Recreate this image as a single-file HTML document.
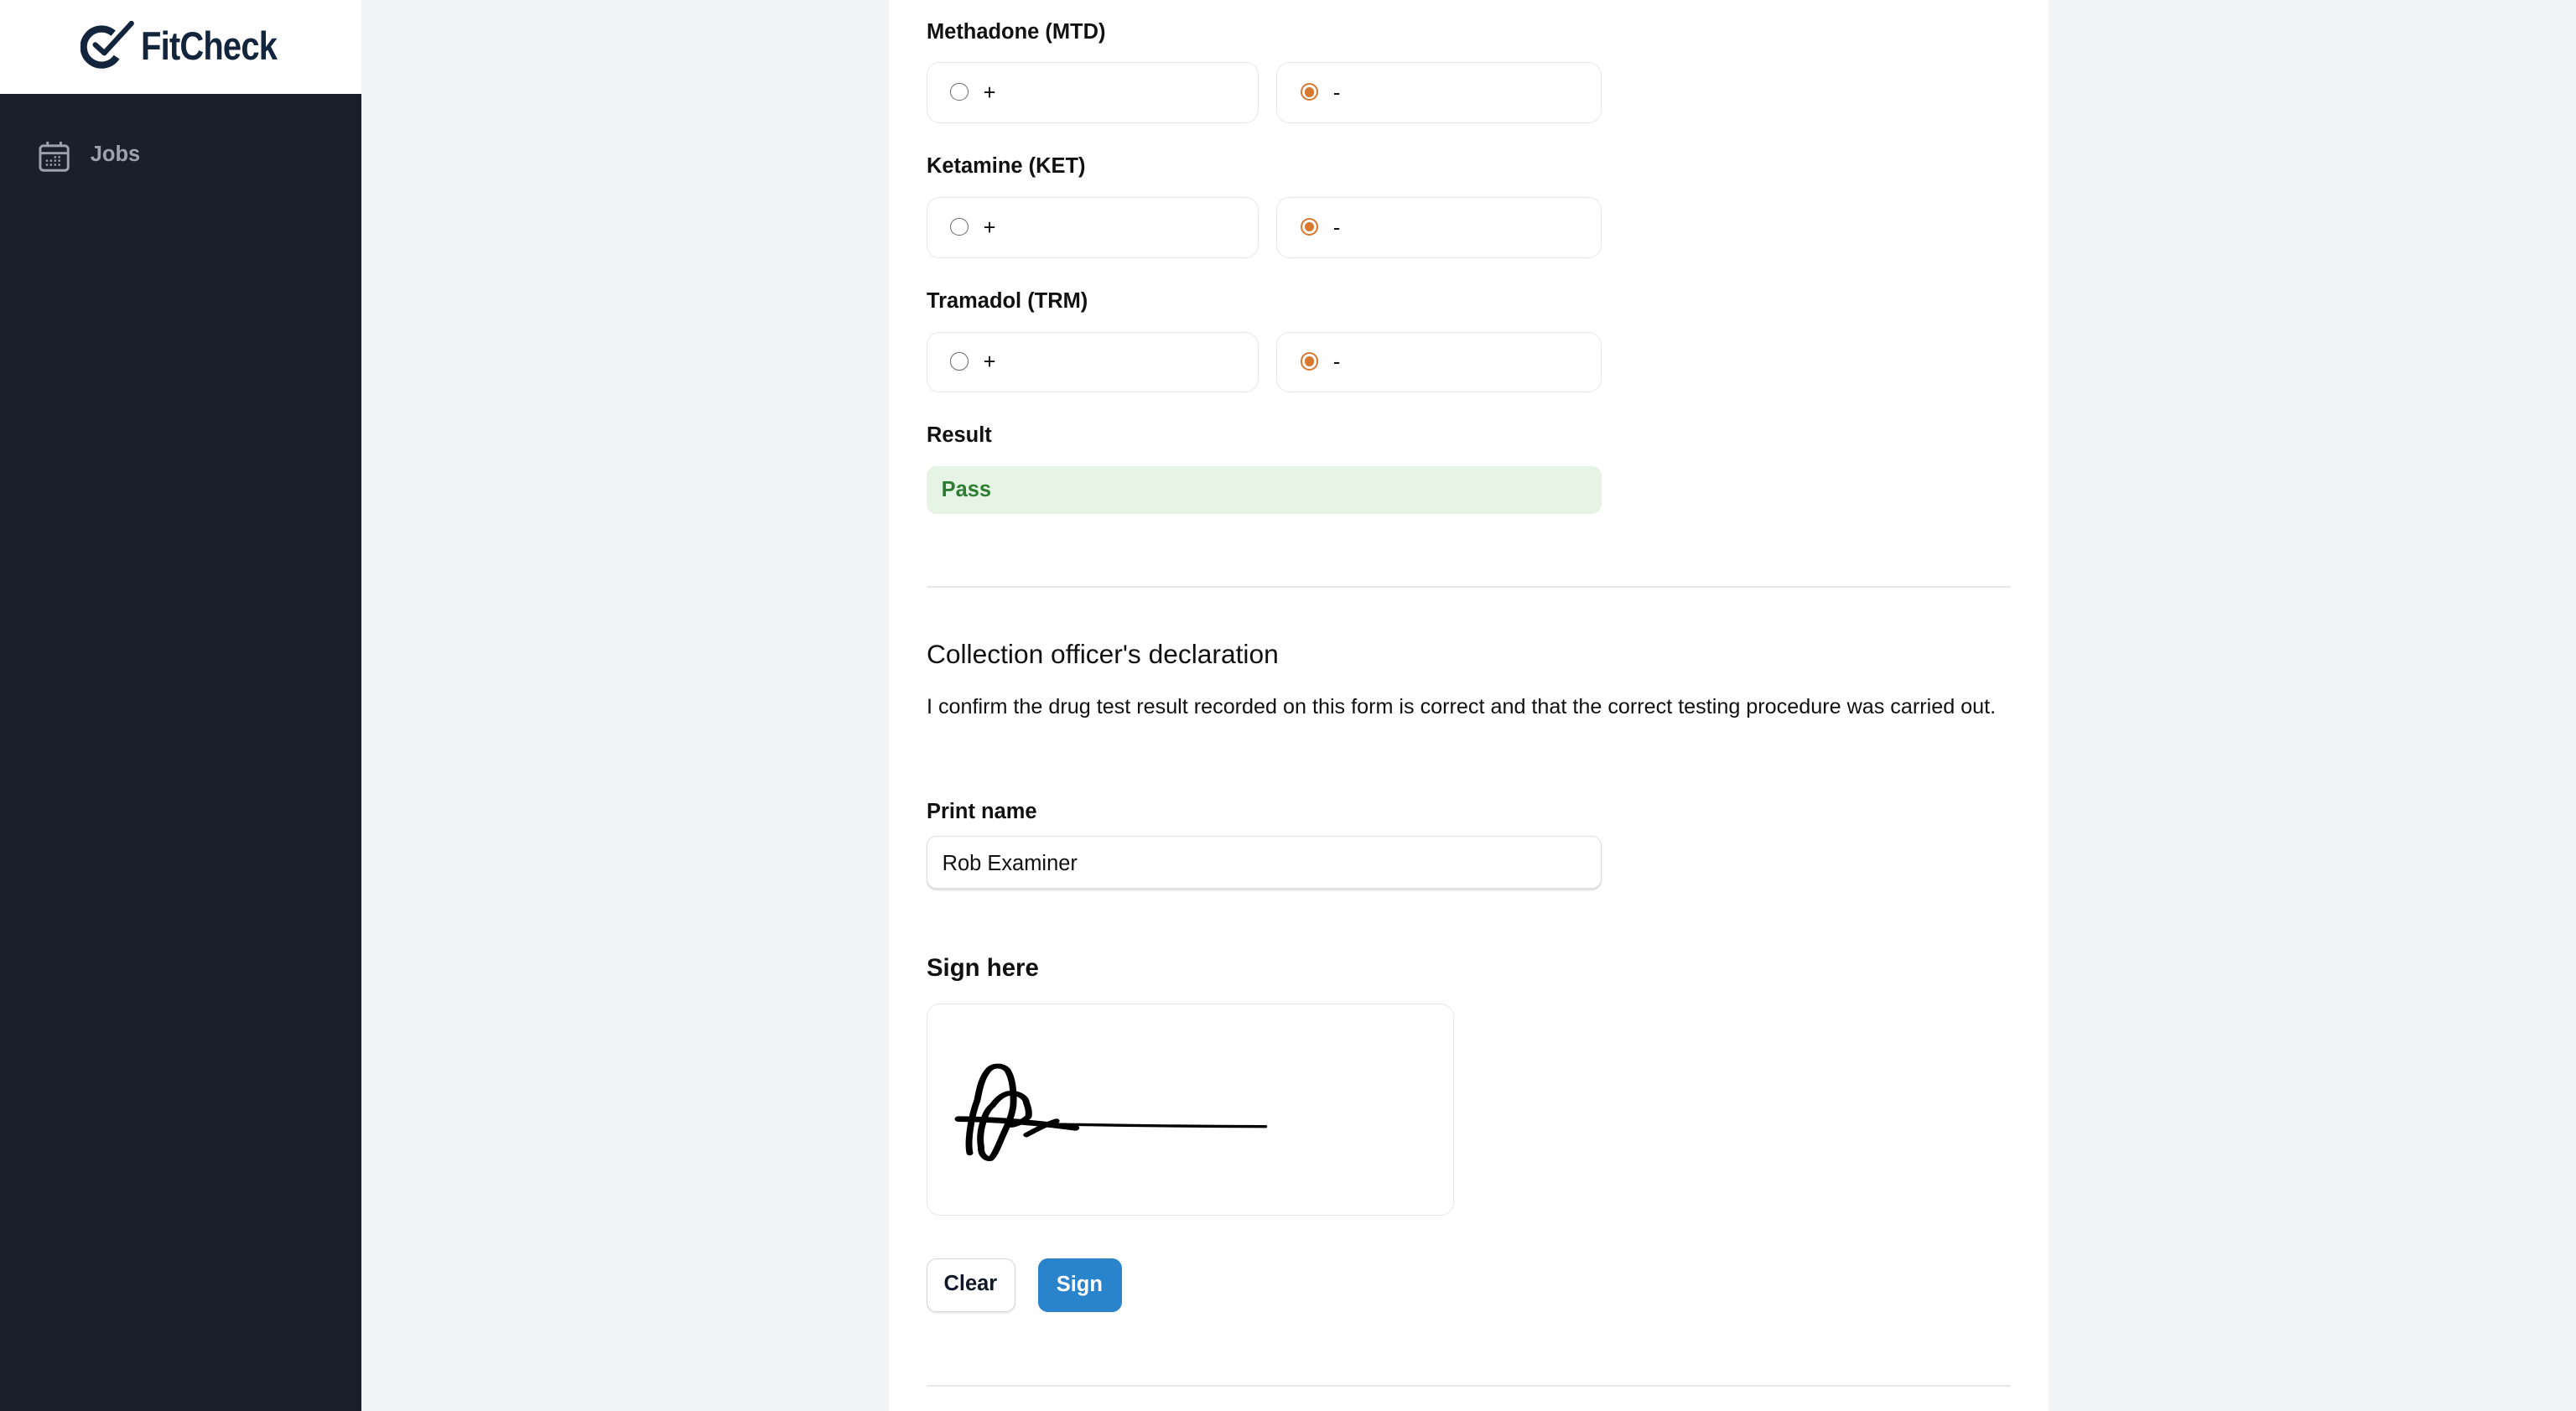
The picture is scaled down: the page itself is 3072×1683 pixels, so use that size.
<!DOCTYPE html>
<html><head><meta charset="utf-8">
<style>
html,body{margin:0;padding:0;}
body{width:1568px;height:859px;zoom:1.95918;overflow:hidden;background:#f3f4f6;font-family:"Liberation Sans",Arial,sans-serif;position:relative;color:#111;}
.side{position:absolute;left:0;top:0;width:220px;height:859px;background:#1b1f2b;}
.logo{position:absolute;left:0;top:0;width:220px;height:57px;background:#fff;}
.logo span{position:absolute;left:86px;top:14px;font-weight:bold;font-size:24px;color:#13243d;letter-spacing:-0.5px;transform:scaleX(0.85);transform-origin:0 0;white-space:nowrap;}
.jobs{position:absolute;left:55px;top:87px;font-size:13px;font-weight:bold;color:#9ca3af;}
.card{position:absolute;left:541px;top:0;width:706px;height:859px;background:#fff;}
.a{position:absolute;}
.lbl{font-size:13px;font-weight:bold;color:#111;}
.box{position:absolute;height:37px;border:1px solid #e5e7eb;border-radius:8px;background:#fff;box-sizing:border-box;}
.r{position:absolute;left:15px;top:12px;width:11px;height:11px;border-radius:50%;border:1px solid #6b6b6b;box-sizing:border-box;}
.r.on{border:1.2px solid #d9782f;}
.r.on::after{content:"";position:absolute;left:1.5px;top:1.5px;width:6px;height:6px;border-radius:50%;background:#d9782f;}
.bt{position:absolute;left:34px;top:11px;font-size:13px;}
</style></head><body>
<div class="side"></div>
<div class="logo">
<svg style="position:absolute;left:49px;top:13px" width="34" height="30" viewBox="0 0 34 30">
<path d="M20 7.5 A11 11 0 1 0 22 22" fill="none" stroke="#13243d" stroke-width="4.2" stroke-linecap="butt"/>
<path d="M9 14.5 L14.5 19.5 L31 1.5" fill="none" stroke="#13243d" stroke-width="3.2" stroke-linecap="round" stroke-linejoin="round"/>
</svg>
<span>FitCheck</span></div>
<svg style="position:absolute;left:23px;top:85px" width="20" height="20" viewBox="0 0 20 20" fill="none" stroke="#9ca3af" stroke-width="1.5">
<rect x="1.5" y="3.5" width="17" height="15" rx="2"/><line x1="1.5" y1="8" x2="18.5" y2="8"/><line x1="6" y1="1" x2="6" y2="4"/><line x1="14" y1="1" x2="14" y2="4"/>
<g fill="#9ca3af" stroke="none"><rect x="5" y="12" width="1.2" height="1.2"/><rect x="7.5" y="12" width="1.2" height="1.2"/><rect x="10" y="12" width="1.2" height="1.2"/><rect x="12.5" y="12" width="1.2" height="1.2"/><rect x="5" y="14.5" width="1.2" height="1.2"/><rect x="7.5" y="14.5" width="1.2" height="1.2"/><rect x="10" y="14.5" width="1.2" height="1.2"/><rect x="12.5" y="14.5" width="1.2" height="1.2"/><rect x="10" y="9.8" width="1.2" height="1.2"/><rect x="12.5" y="9.8" width="1.2" height="1.2"/></g>
</svg>
<div class="jobs">Jobs</div>
<div class="card"></div>

<div class="a lbl" style="left:564px;top:12px">Methadone (MTD)</div>
<div class="box" style="left:564px;top:38px;width:202px"><div class="r" style="left:14px"></div><div class="bt">+</div></div>
<div class="box" style="left:777px;top:38px;width:198px"><div class="r on" style="left:14px"></div><div class="bt">-</div></div>

<div class="a lbl" style="left:564px;top:94px">Ketamine (KET)</div>
<div class="box" style="left:564px;top:120px;width:202px"><div class="r" style="left:14px"></div><div class="bt">+</div></div>
<div class="box" style="left:777px;top:120px;width:198px"><div class="r on" style="left:14px"></div><div class="bt">-</div></div>

<div class="a lbl" style="left:564px;top:176px">Tramadol (TRM)</div>
<div class="box" style="left:564px;top:202px;width:202px"><div class="r" style="left:14px"></div><div class="bt">+</div></div>
<div class="box" style="left:777px;top:202px;width:198px"><div class="r on" style="left:14px"></div><div class="bt">-</div></div>

<div class="a lbl" style="left:564px;top:258px">Result</div>
<div class="a" style="left:564px;top:284px;width:411px;height:29px;background:#e5f4e5;border-radius:6px;"><span style="position:absolute;left:9px;top:7px;font-size:13px;font-weight:bold;color:#2e7d32">Pass</span></div>

<div class="a" style="left:564px;top:357px;width:660px;height:1px;background:#e5e7eb"></div>
<div class="a" style="left:564px;top:389px;font-size:16.2px;color:#111">Collection officer's declaration</div>
<div class="a" style="left:564px;top:423px;font-size:12.85px;color:#111">I confirm the drug test result recorded on this form is correct and that the correct testing procedure was carried out.</div>

<div class="a lbl" style="left:564px;top:487px">Print name</div>
<div class="a" style="left:564px;top:509px;width:411px;height:32px;border:1px solid #e0e0e0;border-radius:6px;box-sizing:border-box;box-shadow:0 1px 1px rgba(0,0,0,0.15);background:#fff"><span style="position:absolute;left:9px;top:9px;font-size:13px">Rob Examiner</span></div>

<div class="a" style="left:564px;top:581px;font-size:15px;font-weight:bold">Sign here</div>
<div class="a" style="left:564px;top:611px;width:321px;height:129px;border:1px solid #e5e7eb;border-radius:8px;box-sizing:border-box;background:#fff">
<svg width="321" height="129" style="position:absolute;left:-1px;top:-1px" fill="none" stroke="#000" stroke-linecap="round" stroke-linejoin="round">
<g transform="translate(26,0) scale(1.35,1) translate(-21,0)">
<path d="M21.6 91.5 C20.5 85 22 70 25 59.2 C26 52 27 45.6 30 41 C32 38 36 37.5 38.5 41 C41 46 41.5 55 41.2 62.6 C40.5 70 38 76 36.9 79.6 C35 85 33 93 31 94.9 C28.5 95.5 26.5 92 26.7 88.1 C26 83 26.5 77 27.6 72.8 C28.5 68 30 64.5 31.8 62.6 C34 58.5 37 55 40.3 55 C44 55 47 58 47.1 60.9 C48 64 48.5 67 48 69.4 C46 72 43 74 40.3 74.5" stroke-width="3"/>
<path d="M16.5 70.8 C30 71 45 72 69.3 76.2" stroke-width="3.4"/>
<path d="M47.1 80.5 C52 77 56 74 60.7 72" stroke-width="2.8"/>
</g>
<path d="M80 74 C110 74.5 140 75.2 207 75.4" stroke-width="1.7"/>
</svg>
</div>

<div class="a" style="left:564px;top:766px;width:54px;height:33px;border:1px solid #d1d5db;border-radius:6px;box-sizing:border-box;background:#fff;box-shadow:0 1px 1px rgba(0,0,0,0.08)"><span style="position:absolute;left:10px;top:8px;font-size:13px;font-weight:bold;color:#111827">Clear</span></div>
<div class="a" style="left:632px;top:766px;width:51px;height:33px;border-radius:6px;background:#2a84cc"><span style="position:absolute;left:11px;top:9px;font-size:13px;font-weight:bold;color:#fff">Sign</span></div>

<div class="a" style="left:564px;top:843px;width:660px;height:1px;background:#e5e7eb"></div>
</body></html>
